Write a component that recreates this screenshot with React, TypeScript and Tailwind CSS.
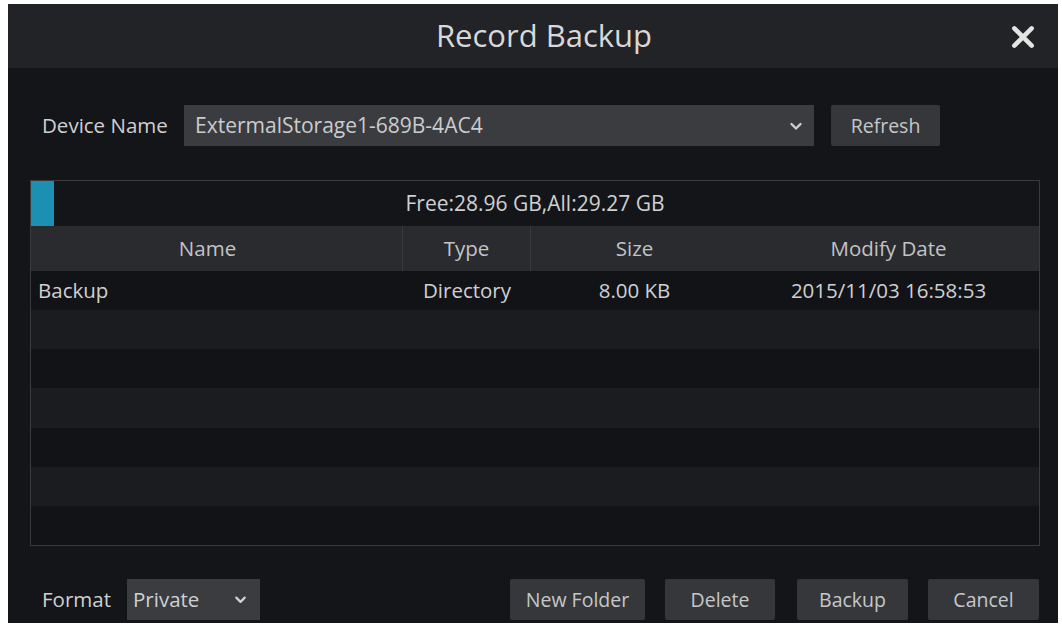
const rows = [
  { name: 'Backup', type: 'Directory', size: '8.00 KB', date: '2015/11/03 16:58:53' },
  null,
  null,
  null,
  null,
  null,
  null,
];

function Chevron({ className }: { className?: string }) {
  return (
    <svg viewBox="0 0 16 16" className={className} fill="none" stroke="currentColor" strokeWidth="2.4" strokeLinecap="round" strokeLinejoin="round">
      <path d="M3.5 6l4.5 4.5L12.5 6" />
    </svg>
  );
}

function Btn({ label, className }: { label: string; className: string }) {
  return (
    <button className={`h-[41px] rounded-[2px] bg-[#35373b] text-[#c6c7c9] text-[19.5px] ${className}`}>
      {label}
    </button>
  );
}

export default function App() {
  return (
    <div className="w-[1062px] h-[625px] bg-white pt-[4px] pl-[8px]" style={{ fontFamily: '"Open Sans", "Noto Sans", sans-serif' }}>
      <div className="w-[1050px] h-[619px] bg-[#141518] flex flex-col text-[#cfd0d2]">
        {/* title bar */}
        <div className="h-[64px] bg-[#222326] flex items-center relative">
          <div className="flex-1 text-center text-[31px] text-[#d8d8d8] pl-[22px] pb-[2px]">Record Backup</div>
          <svg viewBox="0 0 24 24" className="absolute right-[22px] top-[20px] w-[26px] h-[26px] text-[#e4e4e4]" fill="none" stroke="currentColor" strokeWidth="4.2" strokeLinecap="round">
            <path d="M4 4l16 16M20 4L4 20" />
          </svg>
        </div>

        {/* device row */}
        <div className="flex items-center mt-[37px] pl-[34px] h-[41px]">
          <span className="text-[20.5px] w-[142px] whitespace-nowrap">Device Name</span>
          <div className="w-[630px] h-[41px] bg-[#3a3c40] flex items-center justify-between pl-[11px] pr-[10px]">
            <span className="text-[21px] text-[#cbccce]">ExtermalStorage1-689B-4AC4</span>
            <Chevron className="w-[16px] h-[16px] text-[#cfd0d2]" />
          </div>
          <Btn label="Refresh" className="w-[109px] ml-[17px]" />
        </div>

        {/* table */}
        <div className="mt-[34px] ml-[22px] w-[1010px] h-[366px] border border-[#3a3b3f] flex flex-col">
          <div className="h-[45px] flex items-stretch bg-[#141519]">
            <div className="w-[23px] bg-[#1c90b3]" />
            <div className="flex-1 flex items-center justify-center text-[21px] pr-[23px]">Free:28.96 GB,All:29.27 GB</div>
          </div>
          <div className="h-[45px] bg-[#2a2b2f] grid grid-cols-[372px_128px_207px_1fr] text-[20.5px] text-[#c2c3c6]">
            <div className="flex items-center justify-center pr-[18px] border-r border-[#3a3b3f]">Name</div>
            <div className="flex items-center justify-center border-r border-[#3a3b3f]">Type</div>
            <div className="flex items-center justify-center">Size</div>
            <div className="flex items-center justify-center">Modify Date</div>
          </div>
          <div className="flex-1 flex flex-col">
            {rows.map((r, i) => (
              <div
                key={i}
                className={`flex-1 grid grid-cols-[372px_128px_207px_1fr] text-[20.5px] ${i % 2 === 0 ? 'bg-[#121317]' : 'bg-[#1b1c20]'}`}
              >
                {r && (
                  <>
                    <div className="flex items-center pl-[7px]">{r.name}</div>
                    <div className="flex items-center justify-center">{r.type}</div>
                    <div className="flex items-center justify-center">{r.size}</div>
                    <div className="flex items-center justify-center">{r.date}</div>
                  </>
                )}
              </div>
            ))}
          </div>
        </div>

        {/* bottom bar */}
        <div className="flex items-center mt-[33px] pl-[34px] h-[41px]">
          <span className="text-[20.5px] w-[85px]">Format</span>
          <div className="w-[133px] h-[41px] bg-[#3a3c40] flex items-center justify-between pl-[6px] pr-[12px]">
            <span className="text-[20.5px]">Private</span>
            <Chevron className="w-[15px] h-[15px]" />
          </div>
          <Btn label="New Folder" className="w-[135px] ml-[250px]" />
          <Btn label="Delete" className="w-[110px] ml-[20px]" />
          <Btn label="Backup" className="w-[111px] ml-[22px]" />
          <Btn label="Cancel" className="w-[111px] ml-[20px]" />
        </div>
      </div>
    </div>
  );
}
